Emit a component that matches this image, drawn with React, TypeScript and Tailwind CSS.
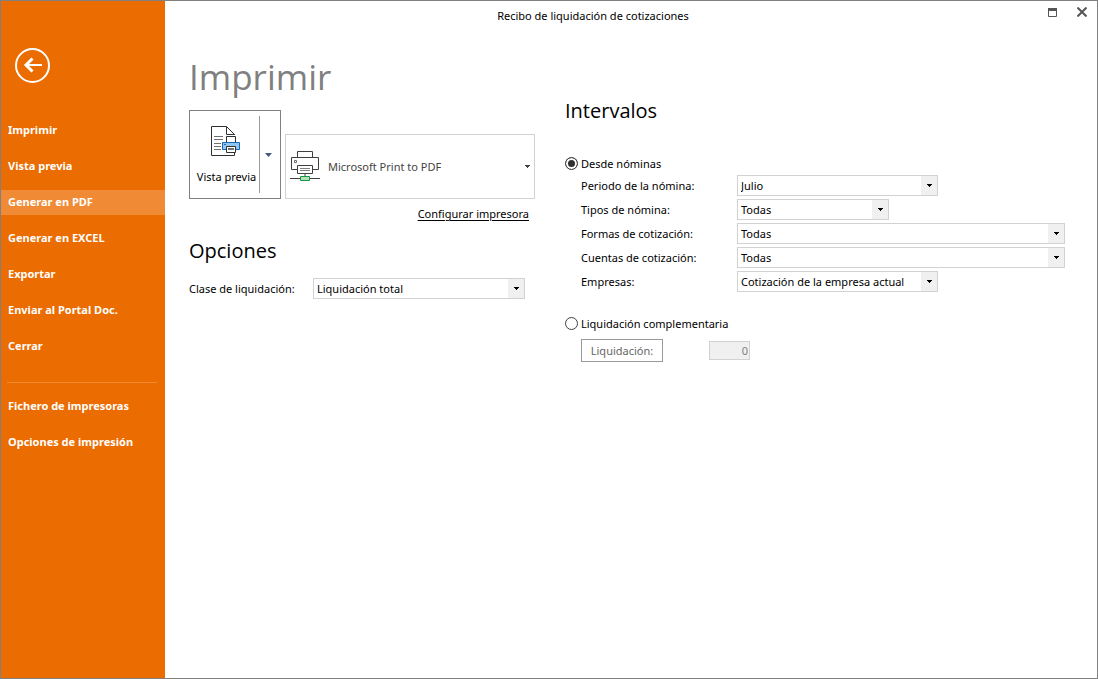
import React, { useState } from 'react'

const menuItems = [
  'Imprimir',
  'Vista previa',
  'Generar en PDF',
  'Generar en EXCEL',
  'Exportar',
  'Enviar al Portal Doc.',
  'Cerrar',
]

const printerItems = ['Fichero de impresoras', 'Opciones de impresión']

const fields = [
  { id: 'periodo', label: 'Periodo de la nómina:', value: 'Julio', width: 'w-[201px]' },
  { id: 'tipos', label: 'Tipos de nómina:', value: 'Todas', width: 'w-[152px]' },
  { id: 'formas', label: 'Formas de cotización:', value: 'Todas', width: 'w-full' },
  { id: 'cuentas', label: 'Cuentas de cotización:', value: 'Todas', width: 'w-full' },
  { id: 'empresas', label: 'Empresas:', value: 'Cotización de la empresa actual', width: 'w-[201px]' },
]

function Arrow({ className = 'text-black' }: { className?: string }) {
  return (
    <svg width="5" height="3" viewBox="0 0 5 3" className={className} shapeRendering="crispEdges">
      <path d="M0 0h5v1h-1v1h-1v1h-1v-1h-1v-1h-1z" fill="currentColor" />
    </svg>
  )
}

function Select({ id, value, width }: { id: string; value: string; width: string }) {
  return (
    <div className={`relative h-[21px] ${width}`}>
      <select
        id={id}
        className="block h-full w-full appearance-none border border-[#d2d2d2] bg-white pl-[3px] pr-4 text-[11px] leading-4 outline-none"
      >
        <option>{value}</option>
      </select>
      {/* Flecha del desplegable */}
      <span className="pointer-events-none absolute inset-y-px right-px flex w-4 items-center justify-center bg-[#f0f0f0]">
        <Arrow />
      </span>
    </div>
  )
}

function Radio({ id, label, checked, onChange }: { id: string; label: string; checked: boolean; onChange: () => void }) {
  return (
    <div className="flex h-4 items-start gap-[3px]">
      <input
        type="radio"
        id={id}
        name="intervalo"
        checked={checked}
        onChange={onChange}
        className="mt-px size-[13px] appearance-none rounded-full border border-[#404040] bg-white checked:bg-[#303030] checked:shadow-[inset_0_0_0_2px_white]"
      />
      <label htmlFor={id}>{label}</label>
    </div>
  )
}

function PreviewIcon() {
  return (
    <svg width="33" height="32" viewBox="0 0 33 32" fill="none" stroke="#303030">
      <path d="M24.500 10V9.500L16.500 1.500H1.500V30.500H24.500V27" />
      <path d="M16.500 1.500V9.500H24.500" />
      <path d="M4 11.500h9M4 14.500h9M4 18.500h7M4 21.500h7M4 24.500h7" stroke="#707070" />
      <path d="M16.500 17V11.500H25.500V17" fill="white" />
      <path d="M12.500 17.500H29.500V24.500H12.500z" fill="#92c5f0" stroke="#1669b5" />
      <path d="M14 19.500h2" stroke="#1669b5" />
      <path d="M16.500 21.500H25.500V27.500H16.500z" fill="white" />
      <path d="M18 24h6" stroke="#707070" strokeWidth="2" />
    </svg>
  )
}

function PrinterIcon() {
  return (
    <svg width="30" height="32" viewBox="0 0 30 32" fill="none" stroke="#404040" className="shrink-0">
      <path d="M7.500 6.500V0.500H22.500V6.500" />
      <path d="M7.500 18.500H1.500V6.500H28.500V18.500H22.500" />
      <path d="M4.500 9.500h2v2h-2z" stroke="#707070" />
      <path d="M7.500 14.500H22.500V22.500H7.500z" />
      <path d="M10 17.500h10M10 19.500h10" stroke="#808080" />
      <path d="M15 23v2" stroke="#a0a0a0" strokeWidth="2" />
      <path d="M0 27.500h30" />
      <path d="M10.500 25.500h9v4h-9z" fill="#b5dfbd" stroke="#159a41" />
    </svg>
  )
}

function MenuButton({ text, active }: { text: string; active?: boolean }) {
  return (
    <button className={`h-[25px] w-full pb-[2px] pl-[7px] text-left text-[11px] leading-4 font-bold ${active ? 'bg-[#f08a35]' : ''}`}>
      {text}
    </button>
  )
}

function Sidebar() {
  return (
    <nav className="w-[164px] shrink-0 bg-[#eb6c00] text-white">
      <button aria-label="Volver" className="mt-[47px] ml-[14px] block">
        <svg width="35" height="35" viewBox="0 0 35 35" fill="none" stroke="white" strokeWidth="2">
          <circle cx="17.5" cy="17.5" r="16.5" />
          <path d="M27 17H11" />
          <path d="M17.500 10.500L11 17L17.500 23.500" strokeWidth="3" />
        </svg>
      </button>
      <div className="mt-[35px] flex flex-col gap-[11px]">
        {menuItems.map((item) => (
          <MenuButton key={item} text={item} active={item === 'Generar en PDF'} />
        ))}
      </div>
      <hr className="mt-[23px] mr-2 mb-[11px] ml-[6px] border-[#f08a35]" />
      <div className="flex flex-col gap-[11px]">
        {printerItems.map((item) => (
          <MenuButton key={item} text={item} />
        ))}
      </div>
    </nav>
  )
}

function TitleBar() {
  return (
    <header className="flex h-[30px] items-center">
      <h2 className="flex-1 text-center text-[11px] leading-4">Recibo de liquidación de cotizaciones</h2>
      <div className="flex w-[76px] items-start justify-end gap-5 pr-[10px] pb-2 text-[#555555]">
        <button aria-label="Maximizar">
          <svg width="9" height="9" viewBox="0 0 9 9" fill="none" stroke="currentColor" className="mt-px">
            <path d="M.5 .5h8v8h-8z" />
            <path d="M0 1.500h9" strokeWidth="3" />
          </svg>
        </button>
        <button aria-label="Cerrar ventana">
          <svg width="10" height="10" viewBox="0 0 10 10" fill="none" stroke="currentColor" strokeWidth="2">
            <path d="M.5 .5L9.500 9.500M9.500 .5L.5 9.500" />
          </svg>
        </button>
      </div>
    </header>
  )
}

export default function App() {
  const [interval, setInterval] = useState('nominas')

  return (
    <div className="flex min-h-screen border border-[#808080] bg-white font-['Noto_Sans','Open_Sans',sans-serif] text-[11px] leading-4 text-black">
      <Sidebar />
      <div className="min-w-0 flex-1">
        <TitleBar />
        <main className="flex gap-[30px] pr-8 pl-6">
          <section className="w-[346px] shrink-0">
            <h1 className="mt-[22px] font-['Open_Sans',sans-serif] text-[35px] leading-[48px] text-[#808080]">Imprimir</h1>
            <div className="mt-[9px] flex items-end gap-1">
              <div className="flex h-[89px] w-[92px] border border-[#808080] py-[5px]">
                <button className="flex w-[70px] flex-col items-center justify-between border-r border-[#999999] pt-[9px] pb-2 pl-1 whitespace-nowrap">
                  <PreviewIcon />
                  <span>Vista previa</span>
                </button>
                <button aria-label="Más opciones" className="flex flex-1 items-center justify-center pr-[3px]">
                  <svg width="7" height="4" viewBox="0 0 7 4">
                    <path d="M0 0h7L3.500 4z" fill="#44597e" />
                  </svg>
                </button>
              </div>
              <button className="flex h-[65px] flex-1 items-center border border-[#d2d2d2] pr-[4px] pl-1 text-[#444444]">
                <PrinterIcon />
                <span className="ml-2 flex-1 text-left">Microsoft Print to PDF</span>
                <Arrow className="text-[#404040]" />
              </button>
            </div>
            <div className="mt-[7px] pr-[6px] text-right">
              <a href="#configurar" className="underline underline-offset-2">Configurar impresora</a>
            </div>

            <h2 className="mt-[15px] font-['Open_Sans',sans-serif] text-[20px] leading-7">Opciones</h2>
            <div className="mt-[13px] flex items-center">
              <label htmlFor="clase" className="w-[124px]">Clase de liquidación:</label>
              <Select id="clase" value="Liquidación total" width="w-[212px]" />
            </div>
          </section>

          <section className="min-w-0 flex-1">
            <h2 className="mt-[66px] font-['Open_Sans',sans-serif] text-[20px] leading-7">Intervalos</h2>
            <div className="mt-[31px]">
              <Radio
                id="nominas"
                label="Desde nóminas"
                checked={interval === 'nominas'}
                onChange={() => setInterval('nominas')}
              />
            </div>
            <div className="mt-[3px] flex flex-col gap-[3px] pl-4">
              {fields.map((field) => (
                <div key={field.id} className="flex items-center">
                  <label htmlFor={field.id} className="w-[156px] shrink-0">{field.label}</label>
                  <div className="min-w-0 flex-1">
                    <Select id={field.id} value={field.value} width={field.width} />
                  </div>
                </div>
              ))}
            </div>
            <div className="mt-6">
              <Radio
                id="complementaria"
                label="Liquidación complementaria"
                checked={interval === 'complementaria'}
                onChange={() => setInterval('complementaria')}
              />
            </div>
            <div className="mt-[7px] flex items-center pl-4">
              <button className="h-[23px] w-[82px] border border-[#999999] text-[#666666]">Liquidación:</button>
              <input
                type="text"
                aria-label="Liquidación"
                defaultValue="0"
                disabled
                className="ml-[46px] h-[19px] w-[41px] border border-[#d2d2d2] bg-[#f0f0f0] pr-px text-right text-[#808080]"
              />
            </div>
          </section>
        </main>
      </div>
    </div>
  )
}
